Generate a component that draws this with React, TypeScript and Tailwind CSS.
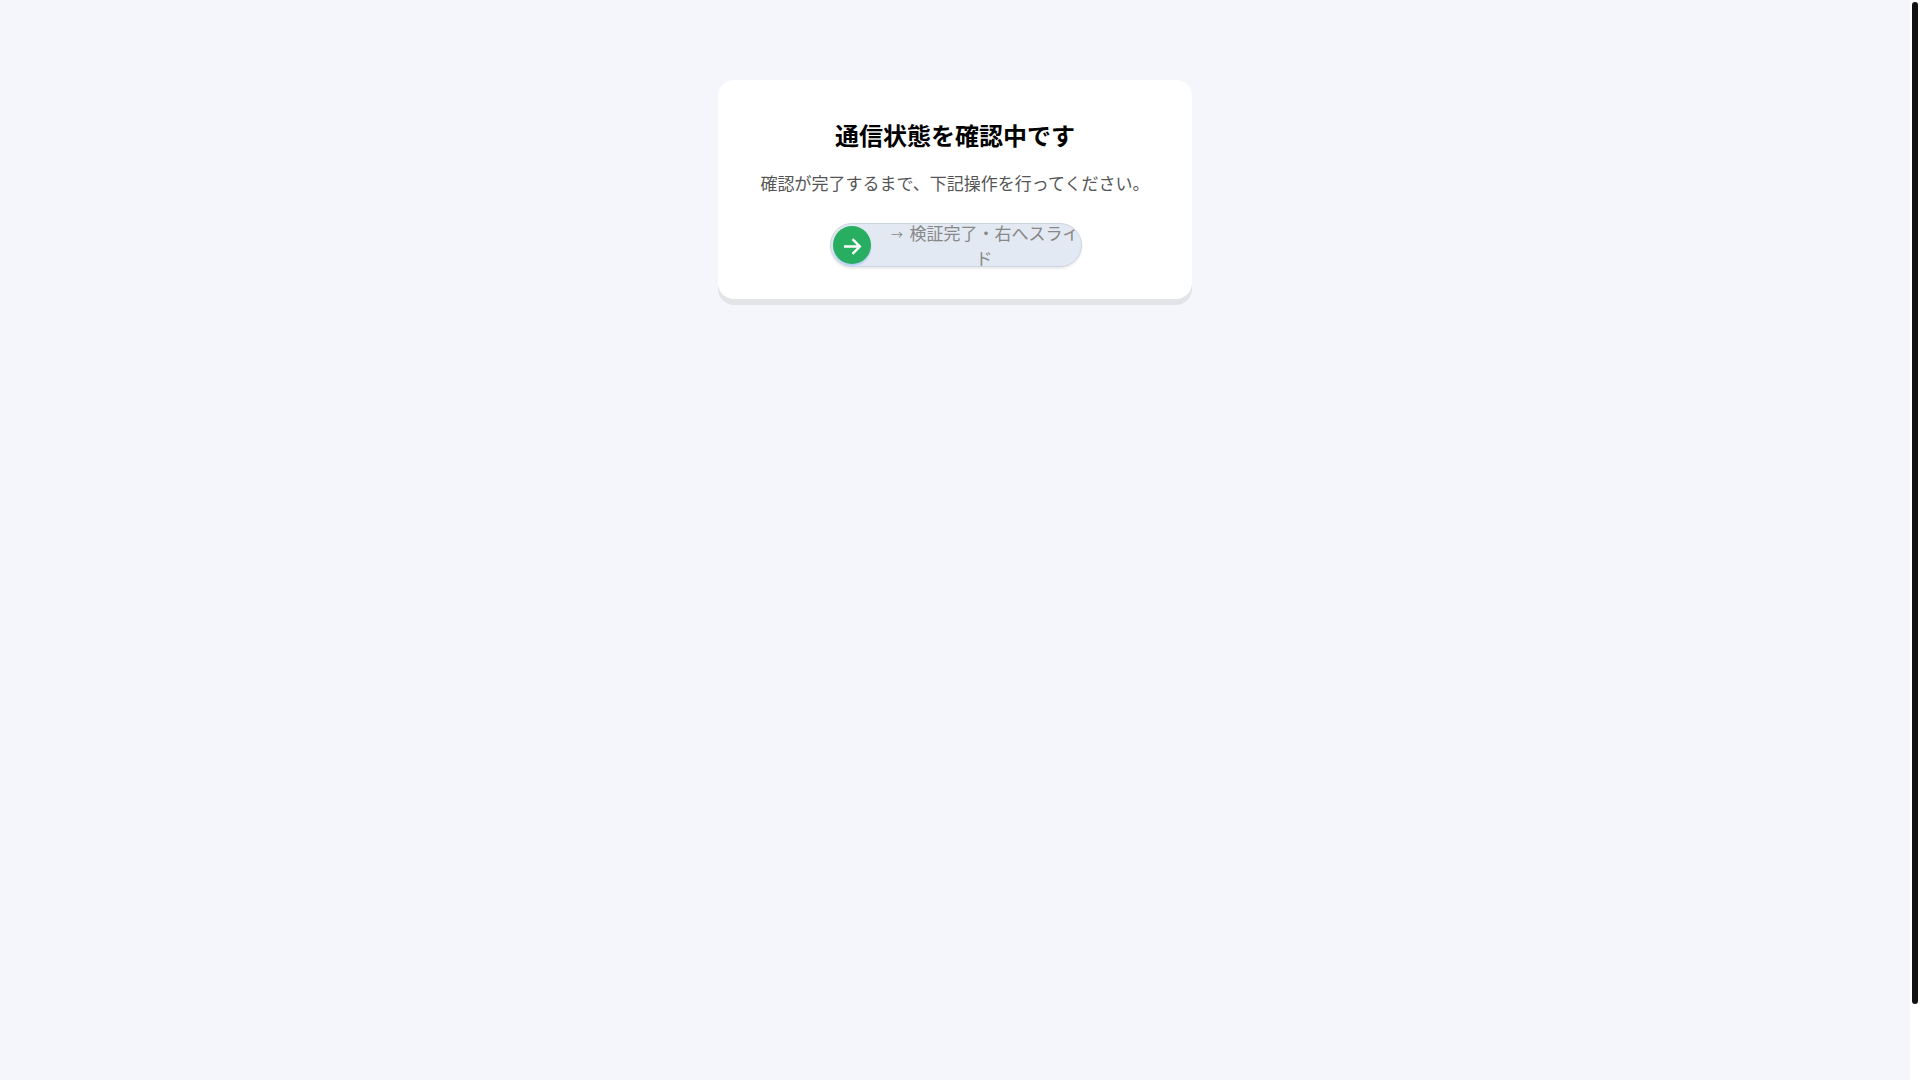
import React, { useState } from "react";

const KNOB_TRAVEL = 206;

function SlideToVerify() {
  const [value, setValue] = useState(0);

  function release() {
    if (value < 100) setValue(0);
  }

  return (
    <div className="relative flex h-11 w-[252px] items-center overflow-hidden rounded-full border border-[#cbd5e1] bg-[#e3e9f2] shadow-[0_2px_2px_rgba(0,0,0,0.08)]">
      <label
        htmlFor="slide"
        className="ml-14 flex-1 text-center text-[17px] leading-[25px] text-[#888888]"
      >
        <span className="inline-block w-[17px] text-xs leading-none">→</span> 検証完了・右へスライド
      </label>

      {/* Knob */}
      <span
        className="absolute left-0.5 top-0.5 flex size-[38px] items-center justify-center rounded-full bg-[#27ae60] text-white shadow-[0_2px_2px_#b3cdf5]"
        style={{ transform: `translateX(${(value / 100) * KNOB_TRAVEL}px)` }}
      >
        <svg viewBox="0 0 20 20" className="mt-0.5 size-5" fill="none" stroke="currentColor" strokeWidth="2.4">
          <path d="M2 10.5h16M10.5 3.2l7.3 7.3-7.3 7.3" />
        </svg>
      </span>

      <input
        id="slide"
        type="range"
        min={0}
        max={100}
        value={value}
        onChange={(e) => setValue(Number(e.target.value))}
        onPointerUp={release}
        className="absolute inset-0 size-full cursor-pointer opacity-0"
      />
    </div>
  );
}

export default function App() {
  return (
    <div className="flex h-screen bg-white font-['Noto_Sans_CJK_JP',sans-serif]" lang="ja">
      <main className="flex-1 bg-[#f4f6fb] px-4 pt-20">
        <section className="mx-auto w-full max-w-[474px] rounded-2xl bg-white px-8 pb-8 pt-[35px] text-center shadow-[0_6px_0_#e3e4e8]">
          <h1 className="text-2xl leading-10 font-bold text-black">通信状態を確認中です</h1>
          <p className="mt-3 mb-6 text-[17px] leading-8 text-[#555555]">
            確認が完了するまで、下記操作を行ってください。
          </p>
          <div className="flex justify-center pl-0.5">
            <SlideToVerify />
          </div>
        </section>
      </main>

      {/* Scroll track */}
      <div className="w-2.5 shrink-0 px-0.5 py-0.5">
        <div className="h-[93.1%] rounded-full bg-[#111111]" />
      </div>
    </div>
  );
}
